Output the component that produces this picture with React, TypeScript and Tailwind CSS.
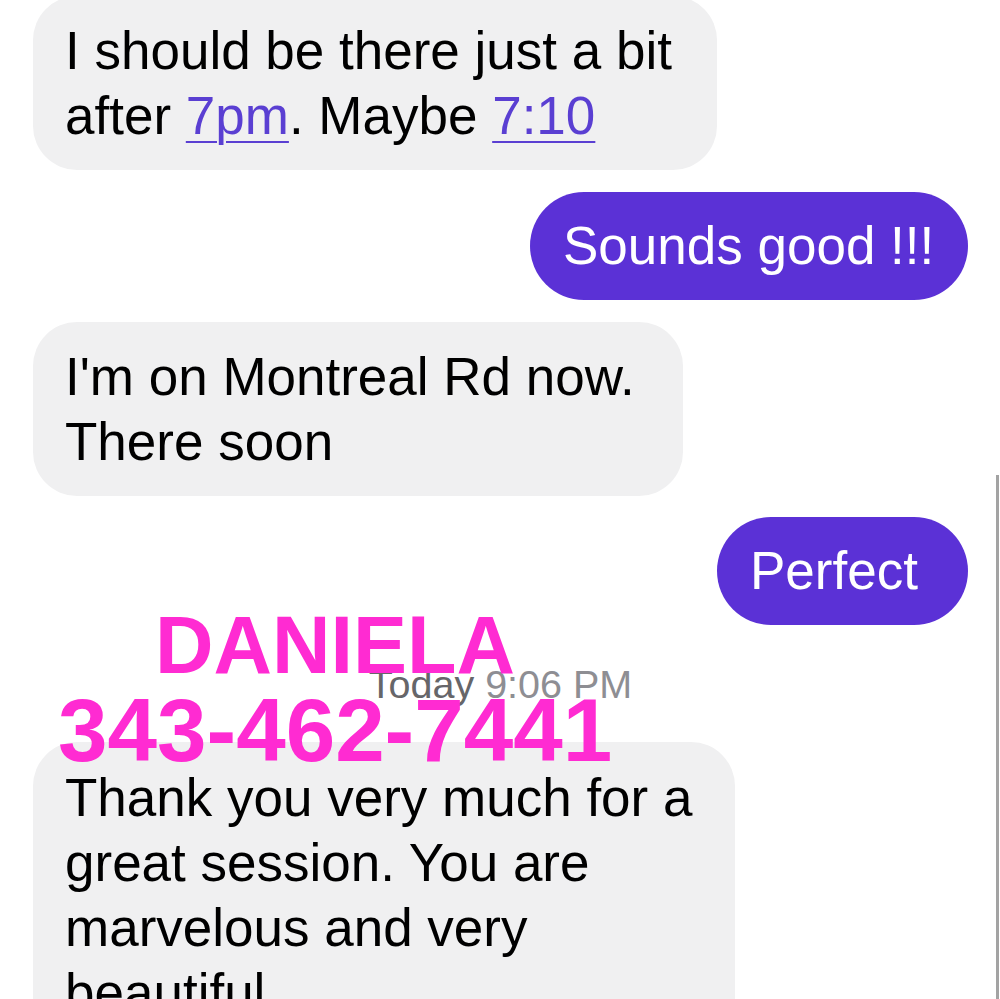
const sans = { fontFamily: '"Liberation Sans", Arial, sans-serif' }

function Incoming({ width, className = '', children }: { width: string; className?: string; children: React.ReactNode }) {
  return (
    <div className={`self-start rounded-[44px] bg-[#f0f0f1] pl-[32px] pr-[20px] py-[22px] text-[53px] leading-[65px] text-black ${width} ${className}`}>
      {children}
    </div>
  )
}

function Outgoing({ width, children }: { width: string; children: React.ReactNode }) {
  return (
    <div className={`self-end rounded-[54px] bg-[#5b31d6] pl-[33px] py-[21px] text-[53px] leading-[66px] text-white ${width}`}>
      {children}
    </div>
  )
}

export default function App() {
  return (
    <div className="relative h-[999px] w-[1000px] overflow-hidden bg-white" style={sans}>
      {/* Messages */}
      <div className="flex flex-col pl-[33px] pr-[32px]">
        <Incoming width="w-[684px]" className="-mt-[4px]">
          <span className="block whitespace-nowrap">I should be there just a bit</span>
          <span className="block whitespace-nowrap">
            after{' '}
            <span className="text-[#5a3fd2] underline decoration-2 underline-offset-[7px]">7pm</span>
            . Maybe{' '}
            <span className="text-[#5a3fd2] underline decoration-2 underline-offset-[7px]">7:10</span>
          </span>
        </Incoming>

        <div className="mt-[22px] flex flex-col">
          <Outgoing width="w-[438px]">
            <span className="whitespace-nowrap">Sounds good !!!</span>
          </Outgoing>
        </div>

        <div className="mt-[22px] flex flex-col">
          <Incoming width="w-[650px]">
            <span className="block whitespace-nowrap">I'm on Montreal Rd now.</span>
            <span className="block whitespace-nowrap">There soon</span>
          </Incoming>
        </div>

        <div className="mt-[21px] flex flex-col">
          <Outgoing width="w-[251px]">
            <span className="whitespace-nowrap">Perfect</span>
          </Outgoing>
        </div>

        {/* Timestamp */}
        <div className="mt-[36px] mb-[35px] text-center text-[39.5px] leading-[46px]">
          <span className="text-[#666669]">Today</span>{' '}
          <span className="text-[#8e8e93]">9:06 PM</span>
        </div>

        <div className="flex flex-col">
          <Incoming width="w-[702px]" className="pt-[23px]">
            <span className="block whitespace-nowrap">Thank you very much for a</span>
            <span className="block whitespace-nowrap">great session. You are</span>
            <span className="block whitespace-nowrap">marvelous and very</span>
            <span className="block whitespace-nowrap">beautiful</span>
          </Incoming>
        </div>
      </div>

      {/* Pink overlay */}
      <div className="absolute left-[155px] top-[605px] text-[81px] font-bold leading-none text-[#ff2bd2]">
        DANIELA
      </div>
      <div className="absolute left-[58px] top-[686px] text-[89px] font-bold leading-none text-[#ff2bd2]">
        343-462-7441
      </div>

      {/* Scroll indicator */}
      <div className="absolute right-[1px] top-[475px] bottom-0 w-[3px] bg-[#a3a3a3]" />
    </div>
  )
}
